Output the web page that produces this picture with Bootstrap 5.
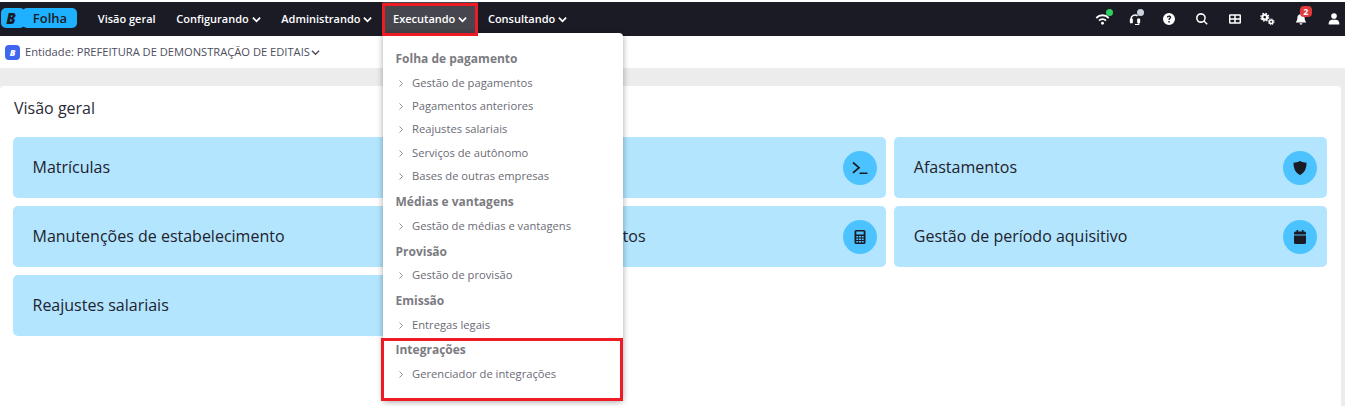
<!DOCTYPE html>
<html lang="en">
<head>
<meta charset="utf-8">
<title>Folha</title>
<link rel="stylesheet" href="https://cdn.jsdelivr.net/npm/bootstrap@5.3.0/dist/css/bootstrap.min.css">
<style>
    html, body { height: 406px; overflow: hidden; }
    body { font-family: "Open Sans", sans-serif; background: #ececec; color: #212529; padding-top: 2px; position: relative; }
    .top-line { position: absolute; top: 0; left: 0; right: 0; height: 2px; background: #fff; }
    .app-nav { height: 34px; background: #1b1b25; padding: 0; flex-wrap: nowrap; justify-content: flex-start; }
    .brand-pill { display: flex; height: 20px; margin-left: 1px; margin-right: 10.5px; width: 76px; color: #1b1b25; font-weight: 600; font-size: 13px; align-items: stretch; margin-bottom: 2px; }
    .brand-b { width: 24px; background: #1eb1ff; border-radius: 5px; text-align: center; font-weight: 800; font-style: italic; font-size: 15px; line-height: 20px; padding-right: 4px; }
    .brand-name { flex: 1; margin-left: -3px; background: #1eb1ff; border-radius: 5px; text-align: center; line-height: 20px; padding-left: 1px; }
    .main-link { color: #fff; font-size: 11px; font-weight: 600; height: 34px; padding: 0 10.3px; display: flex; align-items: center; gap: 3px; text-decoration: none; white-space: nowrap; }
    .main-link.open { background: #46464e; }
    .main-link svg { width: 9px; height: 7px; }
    .tool-row { margin-left: auto; display: flex; align-items: center; height: 34px; gap: 11.1px; padding-bottom: 1px; }
    .tool-item { width: 22px; height: 12px; display: flex; justify-content: center; position: relative; }
    .tool-item svg { width: 12px; height: 12px; fill: #fff; overflow: visible; }
    .tool-item svg.wide-icon { width: 15px; }
    .dot-state { position: absolute; width: 7px; height: 7px; border-radius: 50%; top: -4px; right: 0; }
    .bell-count { position: absolute; top: -7px; right: 0; width: 12px; height: 11px; border-radius: 4px; background: #e0393e; color: #fff; font-size: 9px; font-weight: 700; line-height: 11px; text-align: center; }
    .entity-bar { height: 32px; background: #fff; display: flex; align-items: center; padding-left: 5px; font-size: 11.15px; color: #4d4d5c; gap: 5px; }
    .entity-logo { width: 15px; height: 15px; border-radius: 4px; background: #3f66ee; color: #fff; font-size: 9px; font-weight: 800; font-style: italic; text-align: center; line-height: 15px; }
    .entity-bar svg { width: 9px; height: 7px; margin-left: -4px; }
    .home-panel { margin-top: 18px; margin-right: 4px; background: #fff; height: 320px; border-radius: 4px 4px 0 0; padding: 11px 14px 0 13px; }
    .panel-title { font-size: 16px; font-weight: 400; line-height: 22px; margin: 0 0 18px 1px; color: #2b2b35; }
    .tile-grid { display: grid; grid-template-columns: repeat(3, 1fr); gap: 8px; }
    .tile { height: 61px; background: #b3e5ff; border-radius: 5px; display: flex; align-items: center; justify-content: space-between; padding: 0 9.5px 0 19.5px; font-size: 16px; color: #22222c; }
    .tile > span:first-child { margin-top: -2px; }
    .tile-icon { width: 34px; height: 34px; border-radius: 50%; background: #4cc3ff; display: flex; align-items: center; justify-content: center; }
    .tile-icon svg { width: 16px; height: 16px; fill: #1b1b25; }
    .exec-menu { position: absolute; left: 383px; top: 33px; width: 240px; height: 368px; background: #fff; border-radius: 0 4px 4px 4px; box-shadow: 0 1px 6px rgba(0,0,0,.35); padding: 16px 0 0 12.5px; font-size: 11.2px; color: #6b6b75; z-index: 5; }
    .menu-head { font-weight: 700; font-size: 12px; line-height: 20px; color: #7b7b82; margin-bottom: 2.4px; }
    .menu-row { display: flex; align-items: center; height: 23.4px; padding-left: 3.5px; }
    .menu-row svg { width: 4px; height: 7px; margin-right: 9px; }
    .menu-gap { margin-top: 3.7px; }
    .red-box { position: absolute; border: 3px solid #ed1c24; z-index: 6; }
    .box-top { left: 382px; top: 3px; width: 96px; height: 33px; }
    .box-bottom { left: 381px; top: 338px; width: 242px; height: 63px; }
</style>
</head>
<body>
<div class="top-line"></div>
<nav class="navbar app-nav">
    <div class="brand-pill"><span class="brand-b">B</span><span class="brand-name">Folha</span></div>
    <a class="main-link" href="#">Visão geral</a>
    <a class="main-link" href="#">Configurando <svg viewBox="0 0 10 7"><path d="M1 1.500l4 4 4-4" fill="none" stroke="#fff" stroke-width="2"/></svg></a>
    <a class="main-link" href="#">Administrando <svg viewBox="0 0 10 7"><path d="M1 1.500l4 4 4-4" fill="none" stroke="#fff" stroke-width="2"/></svg></a>
    <a class="main-link open" href="#">Executando <svg viewBox="0 0 10 7"><path d="M1 1.500l4 4 4-4" fill="none" stroke="#fff" stroke-width="2"/></svg></a>
    <a class="main-link" href="#">Consultando <svg viewBox="0 0 10 7"><path d="M1 1.500l4 4 4-4" fill="none" stroke="#fff" stroke-width="2"/></svg></a>
    <div class="tool-row">
        <div class="tool-item"><svg class="wide-icon" viewBox="0 0 16 14"><path d="M0 5a11 11 0 0 1 16 0l-1.500 1.600a9 9 0 0 0-13 0zM3.200 8.200a6.500 6.500 0 0 1 9.600 0l-1.500 1.500a4.500 4.500 0 0 0-6.600 0z"/><circle cx="8" cy="12" r="1.700"/></svg><span class="dot-state" style="background:#2fd05f"></span></div>
        <div class="tool-item"><svg viewBox="0 0 14 14"><path d="M1.500 7a5.500 5.500 0 0 1 9-4.300L9.300 4A3.700 3.700 0 0 0 3.300 7z"/><rect x="1" y="6.500" width="3.500" height="5.500" rx="1"/><rect x="9.500" y="6.500" width="3.500" height="5.500" rx="1"/><path d="M10.500 12H12v2H7v-1.300h3.500z"/></svg><span class="dot-state" style="background:#c9d3de;right:2px"></span></div>
        <div class="tool-item"><svg viewBox="0 0 14 14"><path fill-rule="evenodd" d="M7 0a7 7 0 1 1 0 14A7 7 0 0 1 7 0zM6.200 9.400v1.700h1.700V9.400zM7 3C5.600 3 4.600 3.800 4.500 5.200h1.600c.1-.6.4-.9.9-.9s.9.300.9.800c0 .9-1.600 1-1.600 3h1.600c0-1.400 1.700-1.500 1.700-3.100C9.600 3.800 8.500 3 7 3z"/></svg></div>
        <div class="tool-item"><svg viewBox="0 0 14 14"><path d="M5.800 0a5.800 5.800 0 0 1 4.600 9.300l3.300 3.300-1.200 1.200-3.300-3.300A5.800 5.800 0 1 1 5.800 0zm0 1.900a3.900 3.900 0 1 0 0 7.800 3.900 3.900 0 0 0 0-7.800z"/></svg></div>
        <div class="tool-item"><svg viewBox="0 0 14 14"><path fill-rule="evenodd" d="M1.500 1.500h11A1.500 1.500 0 0 1 14 3v8a1.500 1.500 0 0 1-1.500 1.500h-11A1.500 1.500 0 0 1 0 11V3a1.500 1.500 0 0 1 1.500-1.500zM1.700 3.200v2.900h4.400V3.200zm6.200 0v2.900h4.400V3.200zM1.700 7.900v2.900h4.400V7.900zm6.200 0v2.900h4.400V7.900z"/></svg></div>
        <div class="tool-item"><svg class="wide-icon" viewBox="0 0 16 13"><circle cx="5" cy="4.500" r="2.600" fill="none" stroke="#fff" stroke-width="2.400"/><circle cx="5" cy="4.500" r="4.300" fill="none" stroke="#fff" stroke-width="1.300" stroke-dasharray="1.800 1.600"/><circle cx="12" cy="9.500" r="1.900" fill="none" stroke="#fff" stroke-width="1.800"/><circle cx="12" cy="9.500" r="3.200" fill="none" stroke="#fff" stroke-width="1" stroke-dasharray="1.300 1.200"/></svg></div>
        <div class="tool-item"><svg viewBox="0 0 14 14"><path d="M7 0a1 1 0 0 1 1 1v.6a4 4 0 0 1 3.200 4c0 3.600 1.800 4.400 1.800 5.400H1c0-1 1.800-1.800 1.800-5.400A4 4 0 0 1 6 1.600V1a1 1 0 0 1 1-1zM5.300 12h3.400a1.700 1.700 0 0 1-3.400 0z"/></svg><span class="bell-count">2</span></div>
        <div class="tool-item"><svg viewBox="0 0 14 14"><circle cx="7" cy="3.500" r="3.300"/><path d="M1.500 13.500c-.5 0-.8-.3-.8-.8 0-2.800 2-4.700 4.300-4.700h4c2.300 0 4.300 1.900 4.300 4.700 0 .5-.3.800-.8.800z"/></svg></div>
    </div>
</nav>
<div class="entity-bar">
    <span class="entity-logo">B</span>
    <span>Entidade: PREFEITURA DE DEMONSTRAÇÃO DE EDITAIS</span>
    <svg viewBox="0 0 10 7"><path d="M1 1.500l4 4 4-4" fill="none" stroke="#4d4d5c" stroke-width="1.500"/></svg>
</div>
<main class="home-panel">
    <h1 class="panel-title">Visão geral</h1>
    <div class="tile-grid">
        <div class="tile"><span>Matrículas</span></div>
        <div class="tile"><span></span><span class="tile-icon"><svg viewBox="0 0 16 16"><path d="M1 2.500l6 5.200-6 5.200" fill="none" stroke="#1b1b25" stroke-width="1.700"/><rect x="7.500" y="12.500" width="8" height="1.500"/></svg></span></div>
        <div class="tile"><span>Afastamentos</span><span class="tile-icon"><svg viewBox="0 0 16 16"><path d="M8 1c2 1 4.300 1.500 6.500 1.700C14.500 8 13 12.500 8 15 3 12.500 1.500 8 1.500 2.700 3.700 2.500 6 2 8 1z"/></svg></span></div>
        <div class="tile"><span>Manutenções de estabelecimento</span></div>
        <div class="tile"><span>Gestão de pagamentos</span><span class="tile-icon"><svg viewBox="0 0 16 16"><path fill-rule="evenodd" d="M4 1h8a1.500 1.500 0 0 1 1.500 1.500v11A1.500 1.500 0 0 1 12 15H4a1.500 1.500 0 0 1-1.500-1.500v-11A1.500 1.500 0 0 1 4 1zm.3 1.500v3h7.400v-3zm0 4.500v1.500h2V7zm2.700 0v1.500h2V7zm2.700 0v1.500h2V7zM4.300 9.500V11h2V9.500zm2.700 0V11h2V9.500zm2.700 0V11h2V9.500zM4.300 12v1.500h2V12zm2.700 0v1.500h2V12zm2.700 0v1.500h2V12z"/></svg></span></div>
        <div class="tile"><span>Gestão de período aquisitivo</span><span class="tile-icon"><svg viewBox="0 0 16 16"><path d="M4.500 1h1.700v1.500h3.600V1h1.700v1.500h1A1.500 1.500 0 0 1 14 4v1.500H2V4a1.500 1.500 0 0 1 1.500-1.500h1zM2 6.500h12v7a1.500 1.500 0 0 1-1.500 1.500h-9A1.500 1.500 0 0 1 2 13.500z"/></svg></span></div>
        <div class="tile"><span>Reajustes salariais</span></div>
    </div>
</main>
<div class="exec-menu">
    <div class="menu-head">Folha de pagamento</div>
    <div class="menu-row"><svg viewBox="0 0 4 7"><path d="M.5.500l3 3-3 3" fill="none" stroke="#777" stroke-width=".8"/></svg>Gestão de pagamentos</div>
    <div class="menu-row"><svg viewBox="0 0 4 7"><path d="M.5.500l3 3-3 3" fill="none" stroke="#777" stroke-width=".8"/></svg>Pagamentos anteriores</div>
    <div class="menu-row"><svg viewBox="0 0 4 7"><path d="M.5.500l3 3-3 3" fill="none" stroke="#777" stroke-width=".8"/></svg>Reajustes salariais</div>
    <div class="menu-row"><svg viewBox="0 0 4 7"><path d="M.5.500l3 3-3 3" fill="none" stroke="#777" stroke-width=".8"/></svg>Serviços de autônomo</div>
    <div class="menu-row"><svg viewBox="0 0 4 7"><path d="M.5.500l3 3-3 3" fill="none" stroke="#777" stroke-width=".8"/></svg>Bases de outras empresas</div>
    <div class="menu-head menu-gap">Médias e vantagens</div>
    <div class="menu-row"><svg viewBox="0 0 4 7"><path d="M.5.500l3 3-3 3" fill="none" stroke="#777" stroke-width=".8"/></svg>Gestão de médias e vantagens</div>
    <div class="menu-head menu-gap">Provisão</div>
    <div class="menu-row"><svg viewBox="0 0 4 7"><path d="M.5.500l3 3-3 3" fill="none" stroke="#777" stroke-width=".8"/></svg>Gestão de provisão</div>
    <div class="menu-head menu-gap">Emissão</div>
    <div class="menu-row"><svg viewBox="0 0 4 7"><path d="M.5.500l3 3-3 3" fill="none" stroke="#777" stroke-width=".8"/></svg>Entregas legais</div>
    <div class="menu-head menu-gap">Integrações</div>
    <div class="menu-row"><svg viewBox="0 0 4 7"><path d="M.5.500l3 3-3 3" fill="none" stroke="#777" stroke-width=".8"/></svg>Gerenciador de integrações</div>
</div>
<div class="red-box box-top"></div>
<div class="red-box box-bottom"></div>
</body>
</html>
